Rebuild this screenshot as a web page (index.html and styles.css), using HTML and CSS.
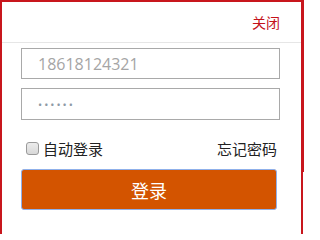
FILE: index.html
```html
<!DOCTYPE html>
<html lang="zh-CN">
<head>
<meta charset="utf-8">
<link rel="stylesheet" href="styles.css">
</head>
<body>
<div class="dialog">
  <div class="header"><a class="close" href="#">关闭</a></div>
  <form class="form">
    <input class="field" type="text" placeholder="18618124321">
    <input class="field pwd" type="password" value="123456">
    <div class="row">
      <label class="auto"><input class="check" type="checkbox"><span>自动登录</span></label>
      <a class="forgot" href="#">忘记密码</a>
    </div>
    <button class="submit" type="button">登录</button>
  </form>
</div>
</body>
</html>
```

FILE: styles.css
```css
html, body {
  margin: 0;
  padding: 0;
  background: #fff;
}
body {
  width: 304px;
  height: 234px;
  overflow: hidden;
  font-family: "Open Sans", "Noto Sans CJK SC", sans-serif;
  background-image: linear-gradient(#c8161d, #c8161d);
  background-repeat: no-repeat;
  background-position: 303px 0;
  background-size: 1px 172px;
}
.dialog {
  box-sizing: border-box;
  width: 303px;
  height: 234px;
  border: 2px solid #c8161d;
  border-bottom: 0;
  background: #fff;
}
.header {
  height: 40px;
  border-bottom: 1px solid #e6e6e6;
  display: flex;
  justify-content: flex-end;
  align-items: center;
  padding-right: 21px;
}
.close {
  color: #c4121a;
  text-decoration: none;
  font-size: 14px;
  line-height: 20px;
  font-family: "Noto Sans CJK SC", sans-serif;
}
.form {
  display: flex;
  flex-direction: column;
  padding: 5px 0 0 19px;
}
.field {
  box-sizing: border-box;
  width: 259px;
  height: 31px;
  margin: 0;
  border: 1px solid #a9a9a9;
  border-radius: 0;
  padding: 0 0 0 16px;
  font-family: "Open Sans", sans-serif;
  font-size: 16px;
  color: #999;
  outline: none;
}
.field::placeholder {
  color: #a5a5a5;
}
.pwd {
  margin-top: 9px;
  height: 32px;
  font-size: 11px;
  color: #8e9aa6;
  letter-spacing: 2px;
}
.row {
  display: flex;
  justify-content: space-between;
  align-items: center;
  width: 256px;
  margin-top: 17px;
  height: 22px;
}
.auto {
  display: flex;
  align-items: center;
  font-family: "Noto Sans CJK SC", sans-serif;
  font-size: 15px;
  color: #222;
}
.check {
  appearance: none;
  -webkit-appearance: none;
  box-sizing: border-box;
  width: 13px;
  height: 13px;
  margin: 0 4px 0 5px;
  border: 1px solid #9a9a9a;
  border-radius: 3px;
  background: linear-gradient(#ececec, #d8d8d8);
}
.forgot {
  font-family: "Noto Sans CJK SC", sans-serif;
  font-size: 15px;
  color: #222;
  text-decoration: none;
}
.submit {
  box-sizing: border-box;
  width: 256px;
  height: 41px;
  margin-top: 10px;
  border: 1px solid #8fb0ea;
  border-radius: 3px;
  background: #d35400;
  color: #fff;
  font-family: "Noto Sans CJK SC", sans-serif;
  font-size: 18px;
  padding: 0;
}
```
